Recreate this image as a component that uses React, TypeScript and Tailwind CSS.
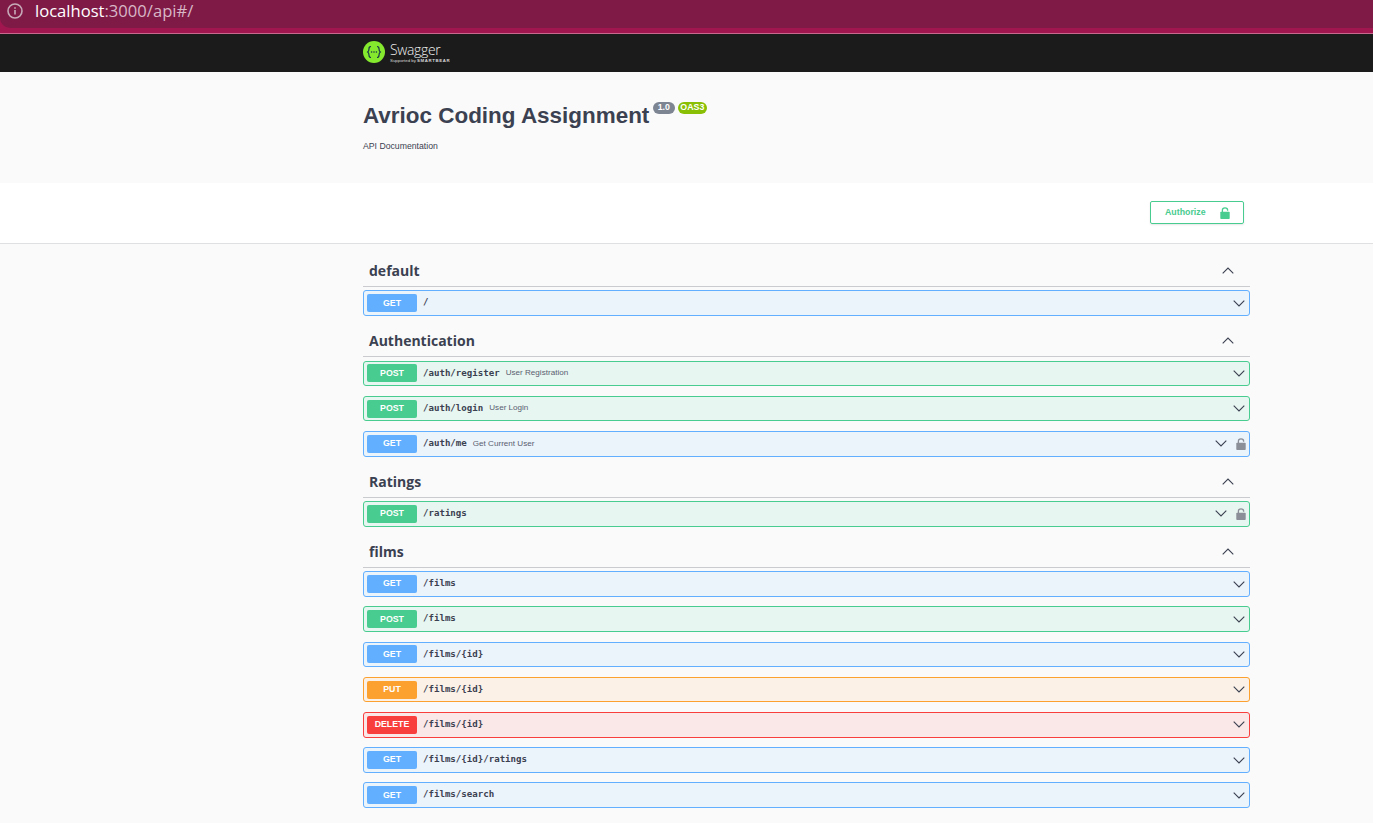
import React from "react";

type Method = "GET" | "POST" | "PUT" | "DELETE";
const styles: Record<Method, { box: string; badge: string }> = {
  GET: { box: "bg-[#ebf3fb] border-[#61affe]", badge: "bg-[#61affe]" },
  POST: { box: "bg-[#e7f6f0] border-[#49cc90]", badge: "bg-[#49cc90]" },
  PUT: { box: "bg-[#fbf1e6] border-[#fca130]", badge: "bg-[#fca130]" },
  DELETE: { box: "bg-[#fae7e7] border-[#f93e3e]", badge: "bg-[#f93e3e]" },
};

const Chevron = ({ up = false }: { up?: boolean }) => (
  <svg width="12" height="7" viewBox="0 0 12 7" fill="none" stroke="#3b4151" strokeWidth="1.1" className="shrink-0">
    <path d={up ? "M.7 6.3 L6 1 L11.3 6.3" : "M.7 .7 L6 6 L11.3 .7"} />
  </svg>
);

const Lock = ({ color }: { color: string }) => (
  <svg width="10" height="12" viewBox="0 0 10 12" className="shrink-0">
    <path d="M2.4 5V3C2.4 1.6 3.5.8 5 .8S7.6 1.6 7.6 3V3.8" fill="none" stroke={color} strokeWidth="1.3" />
    <rect x="0.3" y="4.8" width="9.4" height="7.2" rx="0.8" fill={color} />
  </svg>
);

const Op = ({ m, path, desc, lock }: { m: Method; path: string; desc?: string; lock?: boolean }) => (
  <div className={`flex items-center h-[25.6px] mb-[9.6px] border rounded-[3px] pl-[3px] ${styles[m].box}`}>
    <span className={`w-[50px] h-[18px] rounded-[2px] flex items-center justify-center text-white text-[8.8px] font-bold font-["Liberation_Sans",sans-serif] ${styles[m].badge}`}>
      {m}
    </span>
    <span className='ml-[6px] text-[9.1px] font-semibold text-[#3b4151] font-["DejaVu_Sans_Mono",monospace] whitespace-pre'>{path}</span>
    {desc && <span className='ml-[6px] text-[8.1px] text-[#5a6070] font-["Liberation_Sans",sans-serif]'>{desc}</span>}
    <div className="ml-auto flex items-center">
      <Chevron />
      {lock ? <span className="ml-[9px] mr-[3px] flex"><Lock color="#8a8f98" /></span> : <span className="w-[4px]" />}
    </div>
  </div>
);

const Tag = ({ name, children }: { name: string; children: React.ReactNode }) => (
  <section>
    <div className="flex items-center justify-between h-[31.6px] mb-[3.4px] pl-[6px] pr-[16px] border-b border-[#c9cbcf]">
      <h3 className='text-[14px] font-bold text-[#3b4151] font-["Open_Sans",sans-serif]'>{name}</h3>
      <Chevron up />
    </div>
    {children}
  </section>
);

export default function App() {
  return (
    <div className='min-h-[823px] bg-[#fafafa] font-["Liberation_Sans",sans-serif] overflow-hidden'>
      <div className="bg-[#a1164f] h-[34px] border-b border-[#c9688f]">
        <div className="h-[28px] bg-[#7f1a47] rounded-bl-[10px] flex items-center pl-[7px] pb-[6px]">
          <svg width="16" height="16" viewBox="0 0 16 16" fill="none" stroke="#c7aab8" strokeWidth="1.6">
            <circle cx="8" cy="8" r="7" />
            <path d="M8 7v4.5M8 4.2v1.6" />
          </svg>
          <span className='ml-[12px] text-[16.6px] font-["Open_Sans",sans-serif] text-white leading-none'>
            localhost<span className="text-[#d8b7c6]">:3000/api#/</span>
          </span>
        </div>
      </div>

      <header className="bg-[#1b1b1b] h-[38px] flex items-center pl-[363px]">
        <svg width="22" height="22" viewBox="0 0 22 22" className="shrink-0 -mt-[3px]">
          <circle cx="11" cy="11" r="11" fill="#85ea2d" />
          <path d="M8 5.5c-1.8 0-2 .9-2 2.2 0 1.4-.3 2.6-1.3 3.3 1 .7 1.3 1.9 1.3 3.3 0 1.3.2 2.2 2 2.2M14 5.5c1.8 0 2 .9 2 2.2 0 1.4.3 2.6 1.3 3.3-1 .7-1.3 1.9-1.3 3.3 0 1.3-.2 2.2-2 2.2" fill="none" stroke="#173647" strokeWidth="1.2" />
          <circle cx="8.6" cy="11" r=".8" fill="#173647" />
          <circle cx="11" cy="11" r=".8" fill="#173647" />
          <circle cx="13.4" cy="11" r=".8" fill="#173647" />
        </svg>
        <div className="ml-[5px] flex flex-col text-white">
          <span className='text-[13.9px] leading-[16px] font-light font-["Open_Sans",sans-serif] tracking-[-0.3px] text-[#f0f0f0]'>Swagger</span>
          <span className="text-[4.35px] leading-[6px] text-[#d8d8d8] whitespace-nowrap">
            Supported by <span className="font-bold tracking-[0.6px]">SMARTBEAR</span>
          </span>
        </div>
      </header>

      <div className="h-[111px] pl-[363px] pt-[29px]">
        <div className="flex items-start">
          <h1 className="text-[22.45px] leading-[29px] font-bold text-[#3b4151] whitespace-nowrap">Avrioc Coding Assignment</h1>
          <span className="ml-[3.5px] mt-[1px] h-[12px] w-[22px] rounded-full bg-[#7d8492] text-white text-[8.8px] font-bold flex items-center justify-center">1.0</span>
          <span className="ml-[3px] mt-[1px] h-[12px] w-[29px] rounded-full bg-[#89bf04] text-white text-[8.8px] font-bold flex items-center justify-center">OAS3</span>
        </div>
        <p className="mt-[10px] text-[8.7px] leading-[12px] text-[#3b4151]">API Documentation</p>
      </div>

      <div className="bg-white h-[61px] border-b border-[#dfe0e2] pl-[1150px] pt-[18px]">
        <button className="w-[94px] h-[23px] border border-[#49cc90] rounded-[2px] flex items-center pl-[14px] text-[#49cc90] text-[8.8px] font-bold shadow-[0_1px_2px_rgba(0,0,0,0.1)]">
          Authorize
          <span className="ml-[14px] flex"><Lock color="#49cc90" /></span>
        </button>
      </div>

      <main className="ml-[363px] w-[887px] pt-[11.4px]">
        <Tag name="default">
          <Op m="GET" path="/" />
        </Tag>
        <Tag name="Authentication">
          <Op m="POST" path="/auth/register" desc="User Registration" />
          <Op m="POST" path="/auth/login" desc="User Login" />
          <Op m="GET" path="/auth/me" desc="Get Current User" lock />
        </Tag>
        <Tag name="Ratings">
          <Op m="POST" path="/ratings" lock />
        </Tag>
        <Tag name="films">
          <Op m="GET" path="/films" />
          <Op m="POST" path="/films" />
          <Op m="GET" path="/films/{id}" />
          <Op m="PUT" path="/films/{id}" />
          <Op m="DELETE" path="/films/{id}" />
          <Op m="GET" path="/films/{id}/ratings" />
          <Op m="GET" path="/films/search" />
        </Tag>
      </main>
    </div>
  );
}
